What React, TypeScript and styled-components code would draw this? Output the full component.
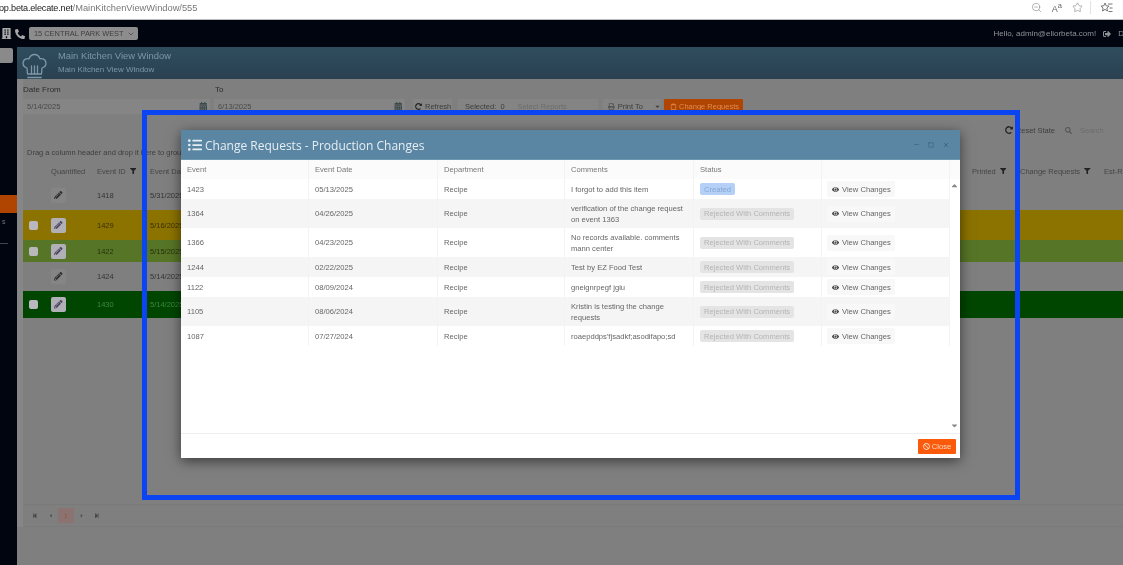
import React from "react";
import styled, { createGlobalStyle } from "styled-components";
import {
  FaBan, FaBuilding, FaCalendarAlt, FaEye, FaFilter, FaListUl, FaPencilAlt, FaPhone, FaPrint, FaSearch,
  FaSignOutAlt, FaStepBackward, FaStepForward, FaCaretLeft, FaCaretRight, FaCaretDown, FaCaretUp, FaRedoAlt, FaRegClipboard,
} from "react-icons/fa";
import { ChevronDown, Minus, Square, Star, X, ZoomOut } from "lucide-react";

const Global = createGlobalStyle`
  html, body { margin: 0; padding: 0; height: 100%; overflow: hidden; background: #7f7f7f; }
  body { font-family: "Liberation Sans", Arial, sans-serif; }
  #root { width: 1123px; height: 565px; overflow: hidden; }
  * { box-sizing: border-box; }
`;

const Page = styled.div`
  position: relative; width: 1123px; height: 565px; overflow: hidden;
  display: flex; flex-direction: column; filter: blur(0.5px);
`;
const BrowserBar = styled.div`
  height: 20px; flex: none; background: #fff; border-bottom: 1px solid #b9bcbf;
  display: flex; align-items: center; justify-content: space-between; padding-bottom: 4px;
`;
const Url = styled.div`font-size: 9.3px; color: #777; white-space: nowrap; margin-left: -1px;`;
const UrlHost = styled.span`color: #222; font-size: 9.1px; letter-spacing: -0.2px;`;
const BrowserIcons = styled.div`display: flex; align-items: center; color: #777; margin-right: 10px; gap: 10px;`;
const AaGlyph = styled.span`font-size: 9px; color: #666; line-height: 10px;`;
const Divider = styled.span`width: 1px; height: 13px; background: #e2e2e2; margin: 0 -1px 0 -3px;`;
const TopBar = styled.div`
  height: 27px; flex: none; background: #00050f; display: flex; align-items: center;
  justify-content: space-between; color: #9a9ea4;
`;
const TopLeft = styled.div`display: flex; align-items: center; gap: 3px; color: #a8a8a8; margin-left: 1px;`;
const FlippedPhone = styled(FaPhone)`transform: scaleX(-1);`;
const SiteSelect = styled.div`
  margin-left: 1px; width: 109px; height: 13px; background: #8d8d8d; border-radius: 2px; color: #3e3e3e;
  font-size: 7.4px; display: flex; align-items: center; gap: 3px; padding-left: 5px; white-space: nowrap;
`;
const TopRight = styled.div`display: flex; align-items: center; font-size: 8px; gap: 7px; margin-right: -1px; color: #8f9398;`;

const Body = styled.div`flex: 1; display: flex; min-height: 0;`;
const Sidebar = styled.div`width: 17px; flex: none; background: #00050f; display: flex; flex-direction: column;`;
const SideButton = styled.div`width: 13px; height: 15px; background: #8a8a8a; border-radius: 0 2px 2px 0; margin-top: 1px;`;
const SideActive = styled.div`height: 18px; margin-top: 132px; background: #b04502;`;
const SideLabel = styled.div`font-size: 7px; color: #777; padding: 5px 0 0 2px; height: 18px;`;
const SideRule = styled.div`height: 1px; width: 8px; background: #444; margin-top: 12px;`;

const Main = styled.div`flex: 1; min-width: 0; display: flex; flex-direction: column; background: #7f7f7f;`;
const Banner = styled.div`
  height: 32px; flex: none; background: linear-gradient(#2f4d5e, #2a4151); display: flex; align-items: center;
  padding-left: 5px; gap: 11px; color: #7d97a8;
`;
const HatSlot = styled.span`display: flex; margin-top: 5px;`;
const BannerText = styled.div`display: flex; flex-direction: column; gap: 4px; margin-top: -1px;`;
const BannerTitle = styled.div`font-size: 9.4px; line-height: 11px;`;
const BannerSub = styled.div`font-size: 8px; line-height: 10px;`;

const Workspace = styled.div`
  flex: 1; display: flex; flex-direction: column; margin-bottom: 38px; border-left: 6px solid #868686;
  font-size: 7.5px; color: #3a3a3a;
`;
const LabelRow = styled.div`height: 20px; display: flex; align-items: center; font-size: 8px; color: #2c2c2c;`;
const LabelCell = styled.div<{ $w: number }>`width: ${p => p.$w}px;`;
const ToolRow = styled.div`height: 15px; display: flex; align-items: center;`;
const DateInput = styled.div<{ $w: number; $mr: number }>`
  width: ${p => p.$w}px; margin-right: ${p => p.$mr}px; height: 15px; background: #858585; display: flex;
  align-items: center; justify-content: space-between; padding: 0 3px 0 4px; color: #4a4a4a;
`;
const CalendarIcon = styled(FaCalendarAlt)`color: #3d4a4d; font-size: 8.5px;`;
const ToolButton = styled.div<{ $w: number; $ml?: number; $pl?: number }>`
  width: ${p => p.$w}px; margin-left: ${p => p.$ml ?? 0}px; height: 15px; display: flex; align-items: center; gap: 3px;
  padding-left: ${p => p.$pl ?? 2}px; color: #3c3c3c; background: #848484; white-space: nowrap;
`;
const Muted = styled.span`color: #6c6c6c; margin-left: 10px;`;
const CaretGap = styled.span`margin-left: 8px; display: inline-flex;`;
const OrangeButton = styled.div`
  width: 79px; height: 15px; margin-left: 3px; background: #b04502; color: #e08a50; border-radius: 1px;
  display: flex; align-items: center; gap: 2px; padding-left: 6px; white-space: nowrap;
`;
const GridTools = styled.div`
  height: 16px; margin-top: 8px; display: flex; justify-content: flex-end; align-items: center;
  padding-right: 19px; color: #3d3d3d; gap: 3px;
`;
const SearchText = styled.span`color: #6d6d6d; margin-left: 5px; width: 24px;`;
const ResetIcon = styled(FaRedoAlt)`color: #222; font-size: 8px;`;
const SearchIcon = styled(FaSearch)`color: #555; font-size: 7px; margin-left: 7px;`;
const GroupHint = styled.div`height: 24px; display: flex; align-items: center; padding: 4px 0 0 4px; color: #3e3e3e;`;

const gridCols = "26px 48px 53px 822px 48px 84px 1fr";
const GridHead = styled.div`
  height: 18px; display: grid; grid-template-columns: ${gridCols}; align-items: center; color: #454545; white-space: nowrap;
`;
const HeadCell = styled.div`display: flex; align-items: center; gap: 4px;`;
const FunnelIcon = styled(FaFilter)`font-size: 6.5px; color: #222;`;
const rowStyles: Record<string, { bg: string; fg: string }> = {
  plain: { bg: "#7f7f7f", fg: "#333" },
  yellow: { bg: "#8c7300", fg: "#3a3000" },
  olive: { bg: "#577526", fg: "#23330c" },
  green: { bg: "#004600", fg: "#3d8a3d" },
};
const GridRow = styled.div<{ $kind: string; $h: number }>`
  height: ${p => p.$h}px; display: grid; grid-template-columns: ${gridCols}; align-items: center;
  background: ${p => rowStyles[p.$kind].bg}; color: ${p => rowStyles[p.$kind].fg};
`;
const CheckBox = styled.span`
  display: block; width: 9px; height: 9px; margin-left: 6px; border-radius: 2px; background: #b8b8be;
`;
const EditButton = styled.div<{ $lit: boolean }>`
  width: 15px; height: 15px; margin-left: 2px; border-radius: 2px; display: flex; align-items: center; justify-content: center;
  background: ${p => (p.$lit ? "#b0b0b6" : "#858585")}; color: ${p => (p.$lit ? "#4b4463" : "#2e2e2e")}; font-size: 8.5px;
`;
const Spacer = styled.div`flex: 1;`;
const Pager = styled.div`
  height: 23px; display: flex; align-items: center; padding-left: 4px;
  border-top: 1px solid #7a7a7a; border-bottom: 1px solid #7a7a7a; color: #555; font-size: 5.5px;
`;
const PageBtn = styled.div<{ $active?: boolean }>`
  width: 15.5px; height: 15px; display: flex; align-items: center; justify-content: center;
  background: ${p => (p.$active ? "#8a7371" : "transparent")}; color: ${p => (p.$active ? "#a54a3a" : "#4a4a4a")};
`;

const Frame = styled.div`
  position: absolute; left: 142px; top: 110px; width: 878px; height: 390px; border: 5px solid #0b45f2; pointer-events: none;
`;
const Modal = styled.div`
  position: absolute; left: 181px; top: 130px; width: 779px; height: 328px; background: #fff;
  display: flex; flex-direction: column; box-shadow: 0 3px 12px rgba(0,0,0,.55); color: #666; font-size: 7.6px;
`;
const ModalHeader = styled.div`
  height: 30px; flex: none; background: #5a86a3; color: #e6eef3; display: flex; align-items: center;
  justify-content: space-between; padding: 0 10px 0 7px; border-bottom: 1px solid #6f97b0;
`;
const ModalTitle = styled.div`display: flex; align-items: center; gap: 3px; font-family: "Open Sans", sans-serif; font-size: 12px; padding-top: 1px;`;
const WindowControls = styled.div`display: flex; align-items: center; gap: 8px; color: #3c5a70;`;
const ModalCols = "128px 129px 127px 129px 128px 128px";
const TableHead = styled.div`
  height: 19px; flex: none; display: grid; grid-template-columns: ${ModalCols} 10px; align-items: stretch; background: #fbfbfb; color: #777;
`;
const TableBody = styled.div`flex: 1; min-height: 0; display: flex;`;
const Rows = styled.div`width: 769px; flex: none; display: flex; flex-direction: column;`;
const Scrollbar = styled.div`
  flex: 1; display: flex; flex-direction: column; justify-content: space-between; align-items: center;
  color: #888; font-size: 9px; padding: 2px 2px 3px 0; line-height: 0;
`;
const TableRow = styled.div<{ $stripe: boolean; $h: number }>`
  height: ${p => p.$h}px; flex: none; display: grid; grid-template-columns: ${ModalCols};
  background: ${p => (p.$stripe ? "#f5f5f5" : "#fff")};
`;
const Cell = styled.div`
  display: flex; align-items: center; padding-left: 6px; line-height: 11px; border-right: 1px solid #f3f3f3;
`;
const Badge = styled.span<{ $created: boolean }>`
  height: 12px; padding: 0 4px; border-radius: 2px; display: inline-flex; align-items: center; white-space: nowrap;
  background: ${p => (p.$created ? "#b4d0f6" : "#e4e4e4")}; color: ${p => (p.$created ? "#86a8d4" : "#b4b4b4")};
`;
const ViewButton = styled.div`
  margin-left: -1px; width: 68px; height: 16px; background: #f8f8f8; border-radius: 2px; display: flex; align-items: center;
  gap: 3px; padding-left: 5px; color: #666; white-space: nowrap;
`;
const EyeIcon = styled(FaEye)`color: #444; font-size: 7px;`;
const ModalFooter = styled.div`
  height: 25px; flex: none; border-top: 1px solid #eee; display: flex; align-items: center; justify-content: flex-end; padding: 0 4px 0 0;
`;
const CloseButton = styled.div`
  width: 38px; height: 15px; background: #fa5a0a; border-radius: 1px; color: #fbd8c2; display: flex; align-items: center;
  justify-content: center; gap: 2px;
`;

const ChefHatIcon = () => (
  <svg width="25" height="26" viewBox="0 0 25 26" fill="none" stroke="currentColor" strokeWidth="1.3" strokeLinejoin="round" strokeLinecap="round">
    <path d="M5 15C2 14 .7 11.5 1.2 9 1.8 6.200 4.500 5 7 5.800 8 2.800 10 1.500 12.500 1.500S17 2.800 18 5.800C20.500 5 23.200 6.200 23.800 9 24.300 11.500 23 14 20 15L19.500 21H5.500Z" />
    <path d="M5.800 24.500H19.200M9.500 13V21M12.500 13V21M15.500 13V21" />
  </svg>
);
const FavoritesIcon = () => (
  <svg width="13" height="12" viewBox="0 0 13 12" fill="none" stroke="currentColor" strokeWidth="1">
    <path d="M5 1L6.200 3.800 9 4.100 6.900 6 7.500 9 5 7.400 2.500 9 3.100 6 1 4.100 3.800 3.800Z" />
    <path d="M8 2H12.500M9.500 6H12.500M8.500 9.500H12.500" />
  </svg>
);

const bgRows = [
  { id: "1418", date: "5/31/2025", kind: "plain", h: 30, check: false },
  { id: "1429", date: "5/16/2025", kind: "yellow", h: 30, check: true },
  { id: "1422", date: "5/15/2025", kind: "olive", h: 22, check: true },
  { id: "1424", date: "5/14/2025", kind: "plain", h: 29, check: false },
  { id: "1430", date: "5/14/2025", kind: "green", h: 27, check: true },
];
const changes = [
  { ev: "1423", date: "05/13/2025", text: "I forgot to add this item", status: "Created", h: 20 },
  { ev: "1364", date: "04/26/2025", text: "verification of the change request on event 1363", status: "Rejected With Comments", h: 29 },
  { ev: "1366", date: "04/23/2025", text: "No records available. comments mann center", status: "Rejected With Comments", h: 29 },
  { ev: "1244", date: "02/22/2025", text: "Test by EZ Food Test", status: "Rejected With Comments", h: 20 },
  { ev: "1122", date: "08/09/2024", text: "gneignrpegf jgiu", status: "Rejected With Comments", h: 20 },
  { ev: "1105", date: "08/06/2024", text: "Kristin is testing the change requests", status: "Rejected With Comments", h: 29 },
  { ev: "1087", date: "07/27/2024", text: "roaepddps'fjsadkf;asodifapo;sd", status: "Rejected With Comments", h: 20 },
];

export default function App() {
  return (
    <Page>
      <Global />
      <BrowserBar>
        <Url><UrlHost>op.beta.elecate.net</UrlHost>/MainKitchenViewWindow/555</Url>
        <BrowserIcons>
          <ZoomOut size={11} strokeWidth={1.2} />
          <AaGlyph>A<sup>a</sup></AaGlyph>
          <Star size={11} strokeWidth={1.2} />
          <Divider />
          <FavoritesIcon />
        </BrowserIcons>
      </BrowserBar>
      <TopBar>
        <TopLeft>
          <FaBuilding size={11} />
          <FlippedPhone size={10} />
          <SiteSelect>15 CENTRAL PARK WEST <ChevronDown size={8} /></SiteSelect>
        </TopLeft>
        <TopRight>
          <span>Hello, admin@eliorbeta.com!</span>
          <FaSignOutAlt size={8} />
          <span>D</span>
        </TopRight>
      </TopBar>
      <Body>
        <Sidebar>
          <SideButton />
          <SideActive />
          <SideLabel>s</SideLabel>
          <SideRule />
        </Sidebar>
        <Main>
          <Banner>
            <HatSlot><ChefHatIcon /></HatSlot>
            <BannerText>
              <BannerTitle>Main Kitchen View Window</BannerTitle>
              <BannerSub>Main Kitchen View Window</BannerSub>
            </BannerText>
          </Banner>
          <Workspace>
            <LabelRow>
              <LabelCell $w={192}>Date From</LabelCell>
              <LabelCell $w={100}>To</LabelCell>
            </LabelRow>
            <ToolRow>
              <DateInput $w={187} $mr={4}>5/14/2025<CalendarIcon /></DateInput>
              <DateInput $w={191} $mr={8}>6/13/2025<CalendarIcon /></DateInput>
              <ToolButton $w={39}><FaRedoAlt size={7} color="#222" />Refresh</ToolButton>
              <ToolButton $w={140} $ml={6} $pl={7}>Selected:&nbsp;&nbsp;0<Muted>Select Reports</Muted></ToolButton>
              <ToolButton $w={58} $ml={5} $pl={5}><FaPrint size={7} color="#555" />Print To<CaretGap><FaCaretDown size={7} /></CaretGap></ToolButton>
              <OrangeButton><FaRegClipboard size={7} />Change Requests</OrangeButton>
            </ToolRow>
            <GridTools>
              <ResetIcon />
              <span>Reset State</span>
              <SearchIcon />
              <SearchText>Search</SearchText>
            </GridTools>
            <GroupHint>Drag a column header and drop it here to group by that column</GroupHint>
            <GridHead>
              <span />
              <HeadCell>&nbsp;Quantified</HeadCell>
              <HeadCell>Event ID <FunnelIcon /></HeadCell>
              <HeadCell>Event Date</HeadCell>
              <HeadCell>Printed <FunnelIcon /></HeadCell>
              <HeadCell>Change Requests <FunnelIcon /></HeadCell>
              <HeadCell>Est-R</HeadCell>
            </GridHead>
            {bgRows.map(r => (
              <GridRow key={r.id} $kind={r.kind} $h={r.h}>
                <div>{r.check && <CheckBox />}</div>
                <EditButton $lit={r.check}><FaPencilAlt /></EditButton>
                <div>{r.id}</div>
                <div>{r.date}</div>
              </GridRow>
            ))}
            <Spacer />
            <Pager>
              <PageBtn><FaStepBackward /></PageBtn>
              <PageBtn><FaCaretLeft /></PageBtn>
              <PageBtn $active>1</PageBtn>
              <PageBtn><FaCaretRight /></PageBtn>
              <PageBtn><FaStepForward /></PageBtn>
            </Pager>
          </Workspace>
        </Main>
      </Body>

      <Frame />
      <Modal>
        <ModalHeader>
          <ModalTitle><FaListUl size={14} />Change Requests - Production Changes</ModalTitle>
          <WindowControls>
            <Minus size={7} strokeWidth={2} />
            <Square size={6} strokeWidth={2} />
            <X size={8} strokeWidth={2.2} />
          </WindowControls>
        </ModalHeader>
        <TableHead>
          <Cell>Event</Cell>
          <Cell>Event Date</Cell>
          <Cell>Department</Cell>
          <Cell>Comments</Cell>
          <Cell>Status</Cell>
          <Cell />
          <span />
        </TableHead>
        <TableBody>
          <Rows>
            {changes.map((c, i) => (
              <TableRow key={c.ev} $stripe={i % 2 === 1} $h={c.h}>
                <Cell>{c.ev}</Cell>
                <Cell>{c.date}</Cell>
                <Cell>Recipe</Cell>
                <Cell>{c.text}</Cell>
                <Cell><Badge $created={c.status === "Created"}>{c.status}</Badge></Cell>
                <Cell><ViewButton><EyeIcon />View Changes</ViewButton></Cell>
              </TableRow>
            ))}
          </Rows>
          <Scrollbar>
            <FaCaretUp />
            <FaCaretDown />
          </Scrollbar>
        </TableBody>
        <ModalFooter>
          <CloseButton><FaBan size={7} />Close</CloseButton>
        </ModalFooter>
      </Modal>
    </Page>
  );
}
